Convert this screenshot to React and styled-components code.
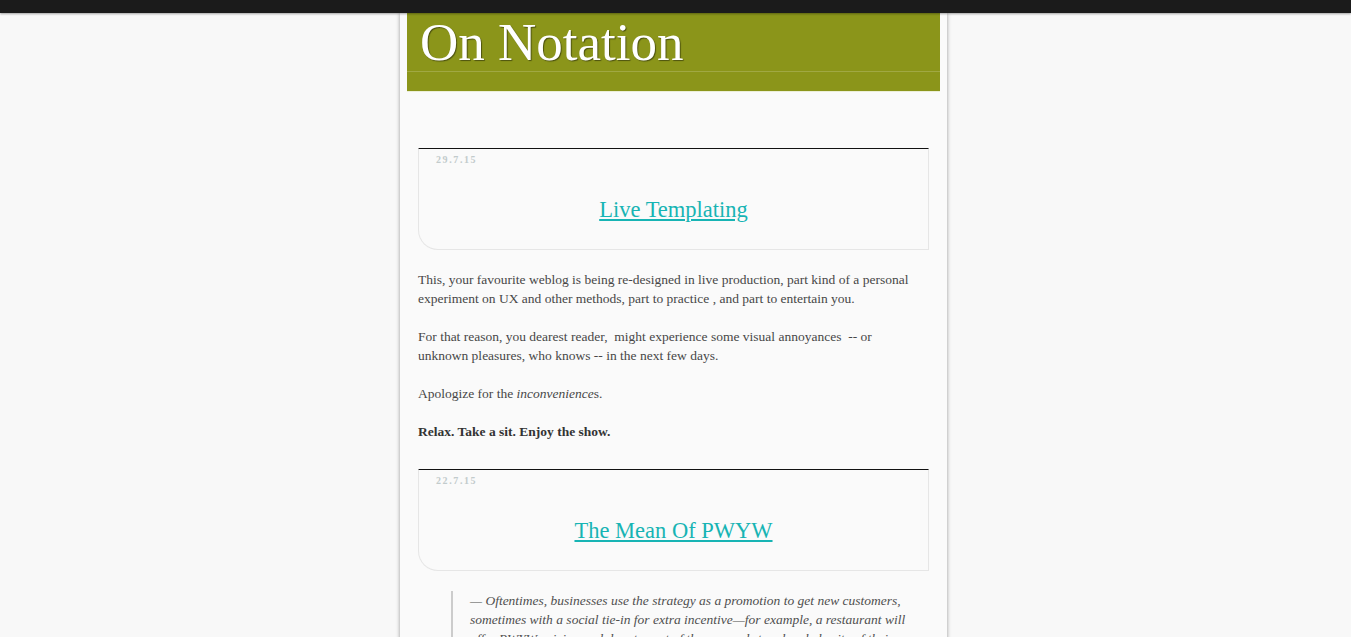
import React from 'react';
import styled, { createGlobalStyle } from 'styled-components';

const Global = createGlobalStyle`
    html, body {
        margin: 0;
        padding: 0;
        height: 100%;
        overflow: hidden;
        background: #f8f8f8;
    }
    #root {
        height: 100%;
    }
`

const Page = styled.div`
    display: flex;
    flex-direction: column;
    height: 100vh;
    font-family: "Liberation Serif", "Times New Roman", serif;
`

const TopBar = styled.div`
    flex: 0 0 13px;
    background: #1b1b1b;
    box-shadow: 0 1px 2px rgba(0, 0, 0, .35);
    position: relative;
    z-index: 1;
`

const Scroller = styled.div`
    flex: 1;
    overflow-y: auto;
    padding-right: 4px;
    background: #f8f8f8;

    &::-webkit-scrollbar {
        width: 4px;
    }
    &::-webkit-scrollbar-track {
        background: #ededed;
    }
    &::-webkit-scrollbar-thumb {
        background: #bdbdbd;
    }
`

const Sheet = styled.div`
    width: 547px;
    margin: 0 auto;
    background: #fafafa;
    box-shadow: 0 0 4px rgba(0, 0, 0, .4);
    padding: 0 0 40px;
`

const Header = styled.header`
    margin: 0 7px;
    background: #8b951a;
    border-bottom: 1px solid #ecefd8;
    padding-bottom: 19px;
`

const SiteTitle = styled.h1`
    margin: 0;
    padding-left: 13px;
    font-size: 53px;
    font-weight: normal;
    line-height: 58px;
    color: #ffffff;
    text-shadow: 1px 1px 1px rgba(0, 0, 0, .45);
    border-bottom: 1px solid rgba(255, 255, 255, .18);
`

const Content = styled.main`
    padding: 56px 18px 0;
`

const Article = styled.article`
    margin-bottom: 28px;
`

const Card = styled.div`
    border: 1px solid #e6e6e6;
    border-top: 1px solid #111111;
    border-bottom-left-radius: 20px;
    padding: 5px 17px 0;
`

const PostDate = styled.div`
    font-size: 10px;
    font-weight: bold;
    line-height: 12px;
    letter-spacing: 1.6px;
    color: #c2cbcc;
`

const PostTitle = styled.h2`
    margin: 31px 0 26px;
    text-align: center;
    font-size: 22.5px;
    font-weight: normal;
    line-height: 26px;

    a {
        color: #17b4b4;
        text-decoration: underline;
    }
`

const Body = styled.div`
    padding-top: 20px;
`

const Para = styled.p`
    margin: 0 0 19px;
    font-size: 13.5px;
    line-height: 19px;
    color: ${({ strong }) => (strong ? '#333333' : '#474747')};
    font-weight: ${({ strong }) => (strong ? 'bold' : 'normal')};
`

const Quote = styled.blockquote`
    margin: 0 8px 19px 33px;
    border-left: 2px solid #cccccc;
    padding-left: 17px;
    font-size: 13.5px;
    line-height: 19px;
    font-style: italic;
    color: #4f4f4f;
`

const Post = ({ date, title, children }) => (
    <Article>
        <Card>
            <PostDate>{date}</PostDate>
            <PostTitle><a href="#">{title}</a></PostTitle>
        </Card>
        <Body>{children}</Body>
    </Article>
);

const App = () => {
    return (
        <>
            <Global />
            <Page>
                <TopBar />
                <Scroller>
                    <Sheet>
                        <Header>
                            <SiteTitle>On Notation</SiteTitle>
                        </Header>
                        <Content>
                            <Post date="29.7.15" title="Live Templating">
                                <Para>
                                    This, your favourite weblog is being re-designed in live production, part kind of a personal
                                    experiment on UX and other methods, part to practice , and part to entertain you.
                                </Para>
                                <Para>
                                    For that reason, you dearest reader,{'\u00a0'} might experience some visual annoyances{'\u00a0'} -- or
                                    <br />
                                    unknown pleasures, who knows -- in the next few days.
                                </Para>
                                <Para>
                                    Apologize for the <em>inconvenience</em>s.
                                </Para>
                                <Para strong>Relax. Take a sit. Enjoy the show.</Para>
                            </Post>
                            <Post date="22.7.15" title="The Mean Of PWYW">
                                <Quote>
                                    — Oftentimes, businesses use the strategy as a promotion to get new customers,
                                    sometimes with a social tie-in for extra incentive—for example, a restaurant will
                                    offer PWYW pricing and donate part of the proceeds to a local charity of their choice.
                                </Quote>
                                <Para>
                                    Pay what you want is less a pricing model than a conversation between the maker and
                                    the people who care about what gets made.
                                </Para>
                            </Post>
                        </Content>
                    </Sheet>
                </Scroller>
            </Page>
        </>
    );
};

export default App;
